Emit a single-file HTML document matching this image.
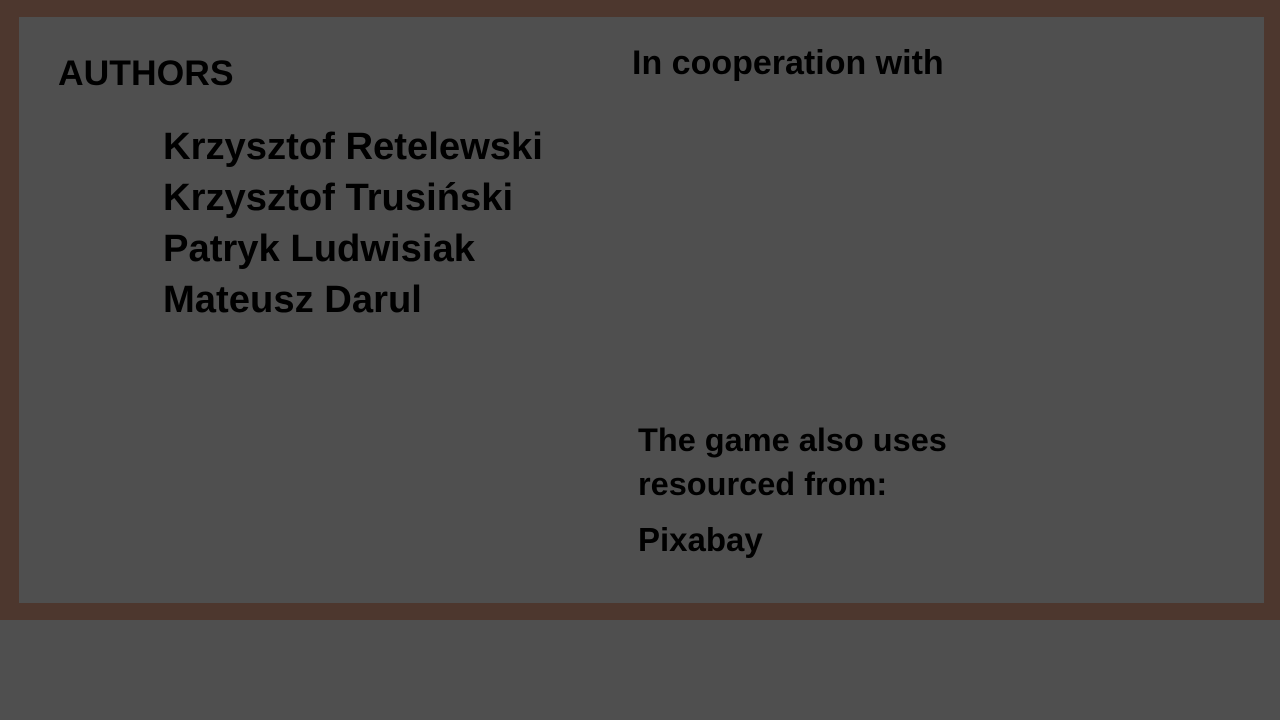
<!DOCTYPE html>
<html><head><meta charset="utf-8"><style>
html,body{margin:0;padding:0;width:1280px;height:720px;background:#4f4f4f;overflow:hidden;font-family:"Liberation Sans",sans-serif;font-weight:bold;color:#000}
.frame{position:absolute;left:0;top:0;width:1280px;height:620px;background:#4d372e}
.inner{position:absolute;left:19px;top:17px;width:1245px;height:586px;background:#4f4f4f}
.t{position:absolute;white-space:nowrap}
</style></head><body>
<div class="frame"></div><div class="inner"></div>
<div class="t" style="left:58px;top:51px;font-size:35.5px;line-height:44px">AUTHORS</div>
<div class="t" style="left:163px;top:121px;font-size:38.2px;line-height:51px">Krzysztof Retelewski<br>Krzysztof Trusiński<br>Patryk Ludwisiak<br>Mateusz Darul</div>
<div class="t" style="left:632px;top:43px;font-size:34px;line-height:40px">In cooperation with</div>
<div class="t" style="left:638px;top:418px;font-size:32.5px;line-height:44px">The game also uses<br>resourced from:</div>
<div class="t" style="left:638px;top:520px;font-size:33px;line-height:40px">Pixabay</div>
</body></html>
